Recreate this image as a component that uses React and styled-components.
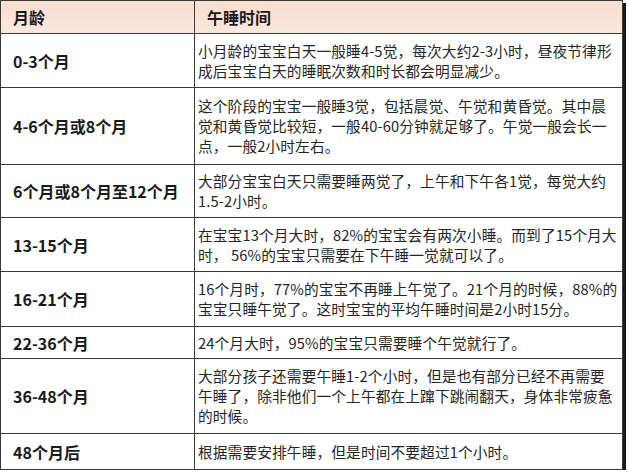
import React from 'react';
import styled, { createGlobalStyle } from 'styled-components';

const GlobalStyle = createGlobalStyle`
  html, body {
    margin: 0;
    padding: 0;
    background: #fff;
  }
  body {
    font-family: "Noto Sans CJK SC", "Noto Sans", sans-serif;
    color: #1e1e1e;
  }
`

const Table = styled.table`
  border-collapse: collapse;
  table-layout: fixed;
  width: 623px;
  border: 1px solid #2a2a2a;
  box-shadow: 3px 3px 0 #1a1a1a;
`

const HeadRow = styled.tr`
  height: 33px;
  background: linear-gradient(#f9ddd0, #fce8dd);
`

const HeadCell = styled.th`
  border: 1px solid #3a3a3a;
  padding: 0 0 0 12px;
  text-align: left;
  font-size: 16px;
  font-weight: 700;
  color: #1a1a1a;
  width: ${p => p.$w || 'auto'};
`

const Row = styled.tr`
  height: ${p => p.$h}px;
  background: #fff;
`

const AgeCell = styled.td`
  border: 1px solid #3a3a3a;
  padding: 0 0 0 12px;
  font-size: 16px;
  font-weight: 700;
  color: #1a1a1a;
  white-space: nowrap;
  vertical-align: middle;
`

const DescCell = styled.td`
  border: 1px solid #3a3a3a;
  padding: 0 0 0 3px;
  font-size: 14.7px;
  line-height: 20px;
  letter-spacing: 0.12px;
  color: #262626;
  vertical-align: middle;
`

const Line = styled.div`
  white-space: nowrap;
`

const rows = [
  {
    age: '0-3个月',
    h: 54,
    lines: [
      '小月龄的宝宝白天一般睡4-5觉，每次大约2-3小时，昼夜节律形',
      '成后宝宝白天的睡眠次数和时长都会明显减少。',
    ],
  },
  {
    age: '4-6个月或8个月',
    h: 77,
    lines: [
      '这个阶段的宝宝一般睡3觉，包括晨觉、午觉和黄昏觉。其中晨',
      '觉和黄昏觉比较短，一般40-60分钟就足够了。午觉一般会长一',
      '点，一般2小时左右。',
    ],
  },
  {
    age: '6个月或8个月至12个月',
    h: 53,
    lines: [
      '大部分宝宝白天只需要睡两觉了，上午和下午各1觉，每觉大约',
      '1.5-2小时。',
    ],
  },
  {
    age: '13-15个月',
    h: 54,
    lines: [
      '在宝宝13个月大时，82%的宝宝会有两次小睡。而到了15个月大',
      '时， 56%的宝宝只需要在下午睡一觉就可以了。',
    ],
  },
  {
    age: '16-21个月',
    h: 55,
    lines: [
      '16个月时，77%的宝宝不再睡上午觉了。21个月的时候，88%的',
      '宝宝只睡午觉了。这时宝宝的平均午睡时间是2小时15分。',
    ],
  },
  {
    age: '22-36个月',
    h: 32,
    lines: ['24个月大时，95%的宝宝只需要睡个午觉就行了。'],
  },
  {
    age: '36-48个月',
    h: 75,
    lines: [
      '大部分孩子还需要午睡1-2个小时，但是也有部分已经不再需要',
      '午睡了，除非他们一个上午都在上蹿下跳闹翻天，身体非常疲惫',
      '的时候。',
    ],
  },
  {
    age: '48个月后',
    h: 36,
    lines: ['根据需要安排午睡，但是时间不要超过1个小时。'],
  },
];

export default function App() {
  return (
    <>
      <GlobalStyle />
      <Table>
        <thead>
          <HeadRow>
            <HeadCell $w="181px">月龄</HeadCell>
            <HeadCell>午睡时间</HeadCell>
          </HeadRow>
        </thead>
        <tbody>
          {rows.map(r => (
            <Row key={r.age} $h={r.h}>
              <AgeCell>{r.age}</AgeCell>
              <DescCell>
                {r.lines.map((l, i) => (
                  <Line key={i}>{l}</Line>
                ))}
              </DescCell>
            </Row>
          ))}
        </tbody>
      </Table>
    </>
  );
}
